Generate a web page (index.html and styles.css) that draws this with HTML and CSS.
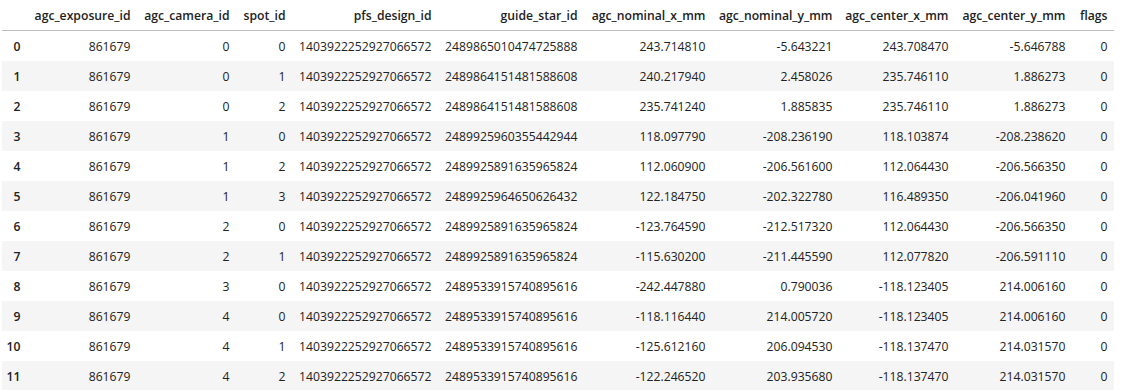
FILE: index.html
```html
<!DOCTYPE html>
<html>
<head>
<meta charset="utf-8">
<link rel="stylesheet" href="styles.css">
</head>
<body>
<table class="df">
<colgroup>
<col class="c-idx"><col class="c-exp"><col class="c-cam"><col class="c-spot"><col class="c-pfs"><col class="c-guide"><col class="c-nx"><col class="c-ny"><col class="c-cx"><col class="c-cy"><col class="c-flags">
</colgroup>
<thead>
<tr><th></th><th>agc_exposure_id</th><th>agc_camera_id</th><th>spot_id</th><th>pfs_design_id</th><th>guide_star_id</th><th>agc_nominal_x_mm</th><th>agc_nominal_y_mm</th><th>agc_center_x_mm</th><th>agc_center_y_mm</th><th>flags</th></tr>
</thead>
<tbody>
<tr><th>0</th><td>861679</td><td>0</td><td>0</td><td>1403922252927066572</td><td>2489865010474725888</td><td>243.714810</td><td>-5.643221</td><td>243.708470</td><td>-5.646788</td><td>0</td></tr>
<tr><th>1</th><td>861679</td><td>0</td><td>1</td><td>1403922252927066572</td><td>2489864151481588608</td><td>240.217940</td><td>2.458026</td><td>235.746110</td><td>1.886273</td><td>0</td></tr>
<tr><th>2</th><td>861679</td><td>0</td><td>2</td><td>1403922252927066572</td><td>2489864151481588608</td><td>235.741240</td><td>1.885835</td><td>235.746110</td><td>1.886273</td><td>0</td></tr>
<tr><th>3</th><td>861679</td><td>1</td><td>0</td><td>1403922252927066572</td><td>2489925960355442944</td><td>118.097790</td><td>-208.236190</td><td>118.103874</td><td>-208.238620</td><td>0</td></tr>
<tr><th>4</th><td>861679</td><td>1</td><td>2</td><td>1403922252927066572</td><td>2489925891635965824</td><td>112.060900</td><td>-206.561600</td><td>112.064430</td><td>-206.566350</td><td>0</td></tr>
<tr><th>5</th><td>861679</td><td>1</td><td>3</td><td>1403922252927066572</td><td>2489925964650626432</td><td>122.184750</td><td>-202.322780</td><td>116.489350</td><td>-206.041960</td><td>0</td></tr>
<tr><th>6</th><td>861679</td><td>2</td><td>0</td><td>1403922252927066572</td><td>2489925891635965824</td><td>-123.764590</td><td>-212.517320</td><td>112.064430</td><td>-206.566350</td><td>0</td></tr>
<tr><th>7</th><td>861679</td><td>2</td><td>1</td><td>1403922252927066572</td><td>2489925891635965824</td><td>-115.630200</td><td>-211.445590</td><td>112.077820</td><td>-206.591110</td><td>0</td></tr>
<tr><th>8</th><td>861679</td><td>3</td><td>0</td><td>1403922252927066572</td><td>2489533915740895616</td><td>-242.447880</td><td>0.790036</td><td>-118.123405</td><td>214.006160</td><td>0</td></tr>
<tr><th>9</th><td>861679</td><td>4</td><td>0</td><td>1403922252927066572</td><td>2489533915740895616</td><td>-118.116440</td><td>214.005720</td><td>-118.123405</td><td>214.006160</td><td>0</td></tr>
<tr><th>10</th><td>861679</td><td>4</td><td>1</td><td>1403922252927066572</td><td>2489533915740895616</td><td>-125.612160</td><td>206.094530</td><td>-118.137470</td><td>214.031570</td><td>0</td></tr>
<tr><th>11</th><td>861679</td><td>4</td><td>2</td><td>1403922252927066572</td><td>2489533915740895616</td><td>-122.246520</td><td>203.935680</td><td>-118.137470</td><td>214.031570</td><td>0</td></tr>
</tbody>
</table>
</body>
</html>
```
FILE: styles.css
```css
html, body {
  margin: 0;
  padding: 0;
  background: #ffffff;
}

body {
  font-family: "Open Sans", "Noto Sans", sans-serif;
  font-size: 12.2px;
  color: #222222;
}

.df {
  margin-left: 2px;
  border-collapse: collapse;
  border-spacing: 0;
  table-layout: fixed;
  width: 1112px;
}

.c-idx { width: 25px; }
.c-exp { width: 110px; }
.c-cam { width: 99px; }
.c-spot { width: 56px; }
.c-pfs { width: 146px; }
.c-guide { width: 146px; }
.c-nx { width: 128px; }
.c-ny { width: 127px; }
.c-cx { width: 116px; }
.c-cy { width: 117px; }
.c-flags { width: 42px; }

.df th,
.df td {
  box-sizing: border-box;
  padding: 2px 6.5px 0 0;
  height: 30px;
  line-height: 28px;
  text-align: right;
  white-space: nowrap;
  vertical-align: top;
}

.df th {
  font-weight: 600;
}

.df thead th {
  padding-top: 1px;
  line-height: 29px;
  border-bottom: 1px solid #bdbdbd;
}

.df tbody tr:nth-child(even) {
  background: #f5f5f5;
}
```
